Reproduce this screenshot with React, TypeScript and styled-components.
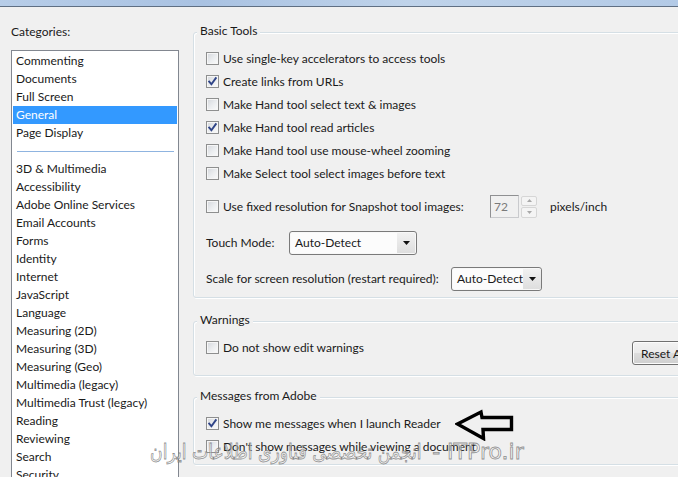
import React from "react";
import styled, { createGlobalStyle } from "styled-components";

const Global = createGlobalStyle`
  html, body {
    margin: 0;
    padding: 0;
    background: #f0f0f0;
    overflow: hidden;
  }
  #root {
    width: 678px;
    height: 477px;
    overflow: hidden;
  }
  * { box-sizing: border-box; }
`;

const UI_FONT = `Lato, "Noto Sans", "DejaVu Sans", sans-serif`;

const Window = styled.div`
  position: relative;
  width: 678px;
  height: 477px;
  overflow: hidden;
  background: #f0f0f0;
  font-family: ${UI_FONT};
  font-size: 12px;
  color: #1a1a1a;
`;

const TitleEdge = styled.div`
  height: 7px;
  background: linear-gradient(90deg, #b7cde8 0%, #a9c2e2 30%, #bfd3ea 60%, #b3cae6 100%);
  border-bottom: 1px solid #5f6f83;
`;

const Body = styled.div`
  display: flex;
  padding: 1px 0 0 11px;
`;

const Sidebar = styled.div`
  width: 168px;
  flex: 0 0 168px;
  display: flex;
  flex-direction: column;
`;

const SideLabel = styled.div`
  margin-top: 16px;
  line-height: 16px;
  height: 16px;
`;

const ListBox = styled.div`
  margin-top: 10px;
  height: 440px;
  background: #fff;
  border: 1px solid #828790;
  padding: 1px;
`;

const ListItem = styled.div<{ $selected?: boolean }>`
  height: 18px;
  line-height: 18px;
  padding-left: 3px;
  white-space: nowrap;
  background: ${(p) => (p.$selected ? "#3399ff" : "transparent")};
  color: ${(p) => (p.$selected ? "#fff" : "#1a1a1a")};
`;

const ListSeparator = styled.div`
  height: 18px;
  display: flex;
  align-items: center;
  padding: 1px 3px 0 4px;
  &::after {
    content: "";
    flex: 1;
    height: 1px;
    background: #8fb4e0;
  }
`;

const Panel = styled.div`
  margin-left: 14px;
  padding-top: 24px;
  width: 520px;
  flex: 0 0 520px;
  display: flex;
  flex-direction: column;
`;

const GroupBox = styled.section<{ $gap?: number; $padBottom: number }>`
  margin-top: ${(p) => p.$gap ?? 0}px;
  border: 1px solid #d5dfe5;
  border-radius: 3px;
  box-shadow: inset 1px 1px 0 #fff, 1px 1px 0 #fff;
  padding: 0 0 ${(p) => p.$padBottom}px 12px;
`;

const GroupTitle = styled.div`
  width: fit-content;
  margin: -10px 0 0 -9px;
  padding: 0 3px;
  line-height: 16px;
  background: #f0f0f0;
`;

const GroupRows = styled.div`
  padding-top: 8px;
  display: flex;
  flex-direction: column;
`;

const Row = styled.div<{ $gap?: number }>`
  display: flex;
  align-items: center;
  height: 23px;
  margin-top: ${(p) => p.$gap ?? 0}px;
`;

const CheckItem = styled.label<{ $width?: number }>`
  display: flex;
  align-items: center;
  gap: 4px;
  white-space: nowrap;
  ${(p) => (p.$width ? `width: ${p.$width}px; flex: 0 0 ${p.$width}px;` : "")}
`;

const Box = styled.span`
  position: relative;
  width: 13px;
  height: 13px;
  flex: 0 0 13px;
  border: 1px solid #8e8f8f;
  background: linear-gradient(135deg, #d4d7dc 0%, #eceef0 55%, #fbfbfb 100%);
  box-shadow: inset 0 0 0 1px #f6f6f6;
  display: flex;
  align-items: center;
  justify-content: center;
`;

const Check = ({ checked }: { checked?: boolean }) => (
  <Box>
    {checked && (
      <svg width="11" height="11" viewBox="0 0 11 11">
        <path
          d="M2.2 5.6 L4.4 8.2 L8.8 2.2"
          fill="none"
          stroke="#2f4487"
          strokeWidth="1.9"
          strokeLinecap="square"
          strokeLinejoin="miter"
        />
      </svg>
    )}
  </Box>
);

const FieldLabel = styled.span<{ $width: number }>`
  width: ${(p) => p.$width}px;
  flex: 0 0 ${(p) => p.$width}px;
  white-space: nowrap;
`;

const SelectBox = styled.div<{ $width: number }>`
  width: ${(p) => p.$width}px;
  height: 24px;
  border: 1px solid #7a7a7a;
  border-radius: 3px;
  background: #fcfcfc;
  display: flex;
  align-items: stretch;
  overflow: hidden;
  box-shadow: inset 0 0 0 1px #f8f8f8;
`;

const SelectText = styled.span`
  flex: 1;
  padding-left: 5px;
  line-height: 22px;
  white-space: nowrap;
`;

const SelectArrow = styled.span`
  width: 18px;
  flex: 0 0 18px;
  margin: 1px 1px 1px 0;
  background: linear-gradient(#f1f1f1, #dedede);
  display: flex;
  align-items: center;
  justify-content: center;
`;

const Select = ({ value, width }: { value: string; width: number }) => (
  <SelectBox $width={width}>
    <SelectText>{value}</SelectText>
    <SelectArrow>
      <svg width="7" height="4" viewBox="0 0 7 4">
        <path d="M0 0 H7 L3.5 4 Z" fill="#111" />
      </svg>
    </SelectArrow>
  </SelectBox>
);

const Spin = styled.div`
  display: flex;
  align-items: center;
  gap: 2px;
`;

const SpinInput = styled.div`
  width: 29px;
  height: 23px;
  border: 1px solid #c9cacd;
  border-top-color: #8f9092;
  border-left-color: #8f9092;
  color: #7a7a7a;
  padding-left: 3px;
  line-height: 21px;
`;

const SpinButtons = styled.div`
  width: 16px;
  height: 22px;
  display: flex;
  flex-direction: column;
  gap: 1px;
`;

const SpinButton = styled.div`
  flex: 1;
  border: 1px solid #d6d6d6;
  border-radius: 2px;
  background: #f4f4f4;
  display: flex;
  align-items: center;
  justify-content: center;
`;

const Unit = styled.span`
  margin-left: 13px;
  white-space: nowrap;
`;

const ButtonRow = styled.div`
  display: grid;
  grid-template-columns: 426px auto;
  align-items: start;
`;

const PushButton = styled.button`
  margin-top: 5px;
  width: 120px;
  height: 24px;
  padding: 0 0 0 8px;
  text-align: left;
  font-family: ${UI_FONT};
  font-size: 12px;
  color: #1a1a1a;
  border: 1px solid #707070;
  border-radius: 3px;
  background: linear-gradient(#f2f2f2 0%, #ebebeb 48%, #dddddd 52%, #cfcfcf 100%);
  box-shadow: inset 0 0 0 1px #fcfcfc;
  white-space: nowrap;
`;

const Callout = styled.svg`
  margin-left: 14px;
  margin-top: 3px;
  flex: 0 0 auto;
`;

/* Site stamp laid over the bottom of the dialog */
const Watermark = styled.div`
  position: absolute;
  left: 150px;
  top: 438px;
  display: flex;
  align-items: baseline;
  font-family: "DejaVu Sans", sans-serif;
  line-height: 28px;
  white-space: nowrap;
  color: rgba(250, 250, 250, 0.55);
  -webkit-text-stroke: 0.8px rgba(110, 110, 110, 0.75);
  pointer-events: none;
`;

const StampPersian = styled.span`
  display: inline-block;
  font-size: 21px;
  transform: scaleX(0.82);
  transform-origin: left center;
  margin-right: -56px;
`;

const StampLatin = styled.span`
  font-size: 22px;
  white-space: pre;
`;

const topCategories = ["Commenting", "Documents", "Full Screen", "General", "Page Display"];
const otherCategories = [
  "3D & Multimedia",
  "Accessibility",
  "Adobe Online Services",
  "Email Accounts",
  "Forms",
  "Identity",
  "Internet",
  "JavaScript",
  "Language",
  "Measuring (2D)",
  "Measuring (3D)",
  "Measuring (Geo)",
  "Multimedia (legacy)",
  "Multimedia Trust (legacy)",
  "Reading",
  "Reviewing",
  "Search",
  "Security",
];

const basicTools: { label: string; checked: boolean }[] = [
  { label: "Use single-key accelerators to access tools", checked: false },
  { label: "Create links from URLs", checked: true },
  { label: "Make Hand tool select text & images", checked: false },
  { label: "Make Hand tool read articles", checked: true },
  { label: "Make Hand tool use mouse-wheel zooming", checked: false },
  { label: "Make Select tool select images before text", checked: false },
];

export default function App() {
  return (
    <>
      <Global />
      <Window>
        <TitleEdge />
        <Body>
          <Sidebar>
            <SideLabel>Categories:</SideLabel>
            <ListBox>
              {topCategories.map((c) => (
                <ListItem key={c} $selected={c === "General"}>
                  {c}
                </ListItem>
              ))}
              <ListSeparator />
              {otherCategories.map((c) => (
                <ListItem key={c}>{c}</ListItem>
              ))}
            </ListBox>
          </Sidebar>

          <Panel>
            <GroupBox $padBottom={7}>
              <GroupTitle>Basic Tools</GroupTitle>
              <GroupRows>
                {basicTools.map((t) => (
                  <Row key={t.label}>
                    <CheckItem>
                      <Check checked={t.checked} />
                      {t.label}
                    </CheckItem>
                  </Row>
                ))}
                <Row $gap={10}>
                  <CheckItem $width={284}>
                    <Check />
                    Use fixed resolution for Snapshot tool images:
                  </CheckItem>
                  <Spin>
                    <SpinInput>72</SpinInput>
                    <SpinButtons>
                      <SpinButton>
                        <svg width="5" height="3" viewBox="0 0 5 3">
                          <path d="M0 3 L2.5 0 L5 3 Z" fill="#a8a8a8" />
                        </svg>
                      </SpinButton>
                      <SpinButton>
                        <svg width="5" height="3" viewBox="0 0 5 3">
                          <path d="M0 0 L2.5 3 L5 0 Z" fill="#a8a8a8" />
                        </svg>
                      </SpinButton>
                    </SpinButtons>
                  </Spin>
                  <Unit>pixels/inch</Unit>
                </Row>
                <Row $gap={13}>
                  <FieldLabel $width={83}>Touch Mode:</FieldLabel>
                  <Select value="Auto-Detect" width={128} />
                </Row>
                <Row $gap={13}>
                  <FieldLabel $width={245}>Scale for screen resolution (restart required):</FieldLabel>
                  <Select value="Auto-Detect" width={91} />
                </Row>
              </GroupRows>
            </GroupBox>

            <GroupBox $gap={23} $padBottom={10}>
              <GroupTitle>Warnings</GroupTitle>
              <GroupRows>
                <ButtonRow>
                  <Row>
                    <CheckItem>
                      <Check />
                      Do not show edit warnings
                    </CheckItem>
                  </Row>
                  <PushButton>Reset All Warnings</PushButton>
                </ButtonRow>
              </GroupRows>
            </GroupBox>

            <GroupBox $gap={21} $padBottom={6}>
              <GroupTitle>Messages from Adobe</GroupTitle>
              <GroupRows>
                <Row>
                  <CheckItem>
                    <Check checked />
                    Show me messages when I launch Reader
                  </CheckItem>
                  <Callout width="60" height="32" viewBox="0 0 60 32">
                    <path
                      d="M2.5 15 L26 3 L27 8.5 L56.5 8.5 L56.5 20.5 L28 20.5 L28.5 29.5 Z"
                      fill="none"
                      stroke="#000"
                      strokeWidth="3.4"
                      strokeLinejoin="miter"
                    />
                  </Callout>
                </Row>
                <Row>
                  <CheckItem>
                    <Check />
                    Don't show messages while viewing a document
                  </CheckItem>
                </Row>
              </GroupRows>
            </GroupBox>
          </Panel>
        </Body>
        <Watermark>
          <StampPersian>انجمن تخصصی فناوری اطلاعات ایران</StampPersian>
          <StampLatin>{" - ITPro.ir"}</StampLatin>
        </Watermark>
      </Window>
    </>
  );
}
